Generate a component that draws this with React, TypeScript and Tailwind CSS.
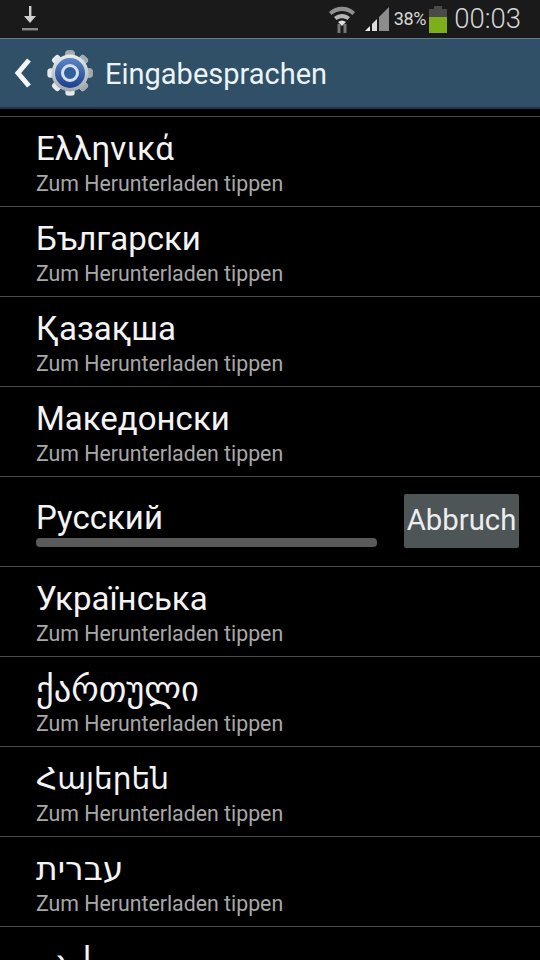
import React from 'react';

const languages = [
  { name: 'Ελληνικά', size: 'text-[33px]' },
  { name: 'Български', size: 'text-[33px]' },
  { name: 'Қазақша', size: 'text-[33px]' },
  { name: 'Македонски', size: 'text-[33px]' },
  { name: 'Русский', size: 'text-[33px]', downloading: true },
  { name: 'Українська', size: 'text-[33px]' },
  { name: 'ქართული', size: 'text-[34.500px]' },
  { name: 'Հայերեն', size: 'text-[29.600px]' },
  { name: 'עברית', size: 'text-[33px]' },
  { name: 'اردو', size: 'text-[33px]' },
];

const GearIcon = () => (
  <svg width="48" height="48" viewBox="0 0 48 48">
    <defs>
      <linearGradient id="gear" x1="0" y1="0" x2="0" y2="1">
        <stop offset="0" stopColor="#e8ecef" />
        <stop offset="1" stopColor="#9fa8ae" />
      </linearGradient>
      <linearGradient id="disc" x1="0" y1="0" x2="0" y2="1">
        <stop offset="0" stopColor="#5b86c6" />
        <stop offset="1" stopColor="#1d3f8c" />
      </linearGradient>
    </defs>
    {[0, 45, 90, 135, 180, 225, 270, 315].map(a => (
      <rect key={a} x="19.5" y="1.5" width="9" height="45" rx="2.5" fill="url(#gear)" transform={`rotate(${a} 24 24)`} />
    ))}
    <circle cx="24" cy="24" r="18.5" fill="url(#gear)" />
    <circle cx="24" cy="24" r="15" fill="url(#disc)" />
    <circle cx="24" cy="24" r="7.5" fill="#2f5f9f" stroke="#d5dfe8" strokeWidth="3" />
  </svg>
);

const StatusBar = () => (
  <div className="h-[38px] bg-[#1a1a1a] flex items-center shrink-0">
    <svg className="ml-[21px]" width="18" height="26" viewBox="0 0 18 26">
      <path d="M8 0h2.4v10H15l-6 7-6-7h5z" fill="#d0d0d0" />
      <rect x="1" y="22" width="16" height="2.4" fill="#8a8a8a" />
    </svg>
    <div className="flex-1" />
    <svg width="28" height="30" viewBox="0 0 28 30" className="mr-[9px]">
      <path d="M1 8C8 1 20 1 27 8l-2.500 3C18 5.500 10 5.500 3.500 11z" fill="#8f8f8f" />
      <path d="M6 13c5-4 11-4 16 0l-2.500 3c-3.500-2.500-7.500-2.500-11 0z" fill="#b5b5b5" />
      <path d="M14 22l-4-4c2.500-2 5.500-2 8 0z" fill="#e0e0e0" />
      <path d="M11 20v9M17 29v-9" stroke="#777" strokeWidth="3" />
    </svg>
    <svg width="25" height="26" viewBox="0 0 25 26" className="mr-[4px]">
      <path d="M24 1v24H14V11z" fill="#8c8c8c" />
      <path d="M12 13v12H7v-7z" fill="#dcdcdc" />
      <path d="M5 20v5H0z" fill="#f0f0f0" />
    </svg>
    <span className="text-[18px] leading-none text-[#d8d8d8] font-['Roboto',sans-serif] tracking-[-0.3px]">38%</span>
    <div className="ml-[3px] w-[18px] h-[27px] flex flex-col items-center">
      <div className="w-[8px] h-[3px] bg-[#4a4a4a]" />
      <div className="w-full h-[8px] bg-[#4a4a4a]" />
      <div className="w-full h-[16px] bg-[#7fae1b]" />
    </div>
    <span className="ml-[7px] mr-[19px] text-[27.500px] leading-none text-[#d4d4d4] font-['Roboto',sans-serif] font-light">00:03</span>
  </div>
);

const ActionBar = () => (
  <div className="h-[71px] bg-[#2f5067] border-t border-[#64798a] border-b-2 border-b-[#1f3444] flex items-center shrink-0">
    <svg className="ml-[14px]" width="18" height="30" viewBox="0 0 18 30">
      <path d="M15 2L4 15l11 13" fill="none" stroke="#f2f6f8" strokeWidth="5" />
    </svg>
    <div className="ml-[14px]"><GearIcon /></div>
    <span className="ml-[11px] pt-[2px] text-[29px] leading-none text-[#ecf3f7] font-['Roboto',sans-serif]">Eingabesprachen</span>
  </div>
);

const LanguageRow = ({ name, size, downloading }: { name: string; size: string; downloading?: boolean }) => (
  <div className="h-[90px] shrink-0 border-b border-[#4a4a4a] pl-[36px] flex items-center">
    <div className={`flex-1 min-w-0 ${downloading ? 'pt-[2px]' : 'pt-[4px]'}`}>
      <div dir="ltr" className={`${size} leading-[38px] text-[#f4f4f4] font-['Roboto','DejaVu_Sans',sans-serif]`}>{name}</div>
      {downloading ? (
        <div className="mt-[1px] w-[341px] h-[9px] rounded-[4px] bg-[#5a5a5a]" />
      ) : (
        <div className="mt-[3px] text-[21.300px] leading-[26px] text-[#a8a8a8] font-['Roboto',sans-serif]">Zum Herunterladen tippen</div>
      )}
    </div>
    {downloading && (
      <div className="mr-[21px] mb-[2px] w-[115px] h-[54px] rounded-[2px] bg-[#4e5557] flex items-center justify-center text-[29.300px] text-[#ededed] font-['Roboto',sans-serif]">
        Abbruch
      </div>
    )}
  </div>
);

export default function App() {
  return (
    <div className="w-[540px] h-[960px] bg-black overflow-hidden flex flex-col">
      <StatusBar />
      <ActionBar />
      <div className="h-[8px] shrink-0 border-b border-[#4a4a4a]" />
      {languages.map(lang => (
        <LanguageRow key={lang.name} {...lang} />
      ))}
    </div>
  );
}
